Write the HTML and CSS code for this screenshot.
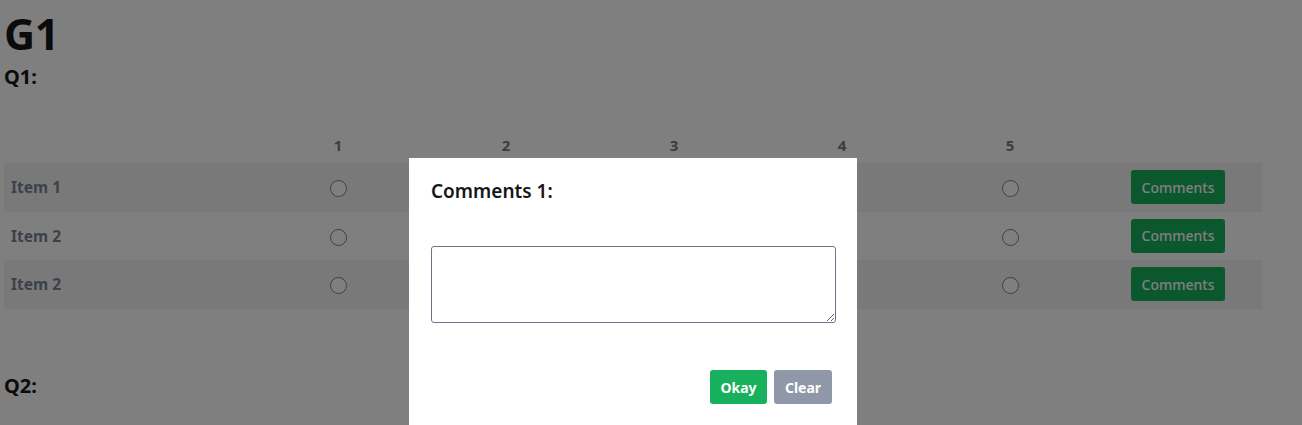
FILE: index.html
```html
<!DOCTYPE html>
<html lang="en">
<head>
<meta charset="utf-8">
<title>G1</title>
<link rel="stylesheet" href="styles.css">
</head>
<body>
<main class="page">
  <h1 class="group-title">G1</h1>
  <section class="question">
    <h2 class="question-title">Q1:</h2>
    <table class="matrix">
      <colgroup>
        <col class="col-label">
        <col class="col-opt"><col class="col-opt"><col class="col-opt"><col class="col-opt"><col class="col-opt">
        <col class="col-opt">
      </colgroup>
      <thead>
        <tr>
          <th></th><th>1</th><th>2</th><th>3</th><th>4</th><th>5</th><th></th>
        </tr>
      </thead>
      <tbody>
        <tr class="stripe">
          <td class="label">Item 1</td>
          <td><span class="radio"></span></td><td><span class="radio"></span></td><td><span class="radio"></span></td><td><span class="radio"></span></td><td><span class="radio"></span></td>
          <td><button class="btn btn-green btn-comments">Comments</button></td>
        </tr>
        <tr>
          <td class="label">Item 2</td>
          <td><span class="radio"></span></td><td><span class="radio"></span></td><td><span class="radio"></span></td><td><span class="radio"></span></td><td><span class="radio"></span></td>
          <td><button class="btn btn-green btn-comments">Comments</button></td>
        </tr>
        <tr class="stripe">
          <td class="label">Item 2</td>
          <td><span class="radio"></span></td><td><span class="radio"></span></td><td><span class="radio"></span></td><td><span class="radio"></span></td><td><span class="radio"></span></td>
          <td><button class="btn btn-green btn-comments">Comments</button></td>
        </tr>
      </tbody>
    </table>
  </section>
  <section class="question">
    <h2 class="question-title q2">Q2:</h2>
  </section>
</main>
<div class="overlay"></div>
<div class="modal">
  <h3 class="modal-title">Comments 1:</h3>
  <textarea class="modal-text"></textarea>
  <div class="modal-actions">
    <button class="btn btn-green btn-modal">Okay</button>
    <button class="btn btn-gray btn-modal">Clear</button>
  </div>
</div>
</body>
</html>
```

FILE: styles.css
```css
* { box-sizing: border-box; }
html, body { margin: 0; padding: 0; background: #ffffff; }
body {
  font-family: "Noto Sans", "Open Sans", sans-serif;
  color: #161616;
  overflow: hidden;
  height: 425px;
}
.page { padding: 0 4px; }
.group-title {
  font-size: 43px;
  font-weight: 700;
  line-height: 50px;
  margin: 9px 0 0 0;
  letter-spacing: -0.3px;
}
.question-title {
  font-size: 20px;
  font-weight: 700;
  line-height: 26px;
  margin: 5px 0 0 0;
}
.question-title.q2 { margin-top: 64px; }
.matrix {
  margin-top: 36px;
  border-collapse: collapse;
  table-layout: fixed;
  width: 1258px;
}
.col-label { width: 250px; }
.col-opt { width: 168px; }
.matrix th {
  font-size: 15px;
  font-weight: 700;
  color: #727b91;
  height: 37px;
  padding: 0;
  text-align: center;
  vertical-align: middle;
}
.matrix td {
  height: 48.5px;
  padding: 0;
  text-align: center;
  vertical-align: middle;
}
.matrix tr.stripe td { background: #f3f3f3; }
.matrix td.label {
  text-align: left;
  padding-left: 7px;
  font-size: 15.5px;
  font-weight: 700;
  color: #7a8399;
}
.radio {
  display: inline-block;
  width: 17px;
  height: 17px;
  border: 1.5px solid #7a8199;
  border-radius: 50%;
  background: #fff;
  vertical-align: middle;
}
.btn {
  border: none;
  border-radius: 3px;
  font-family: inherit;
  font-weight: 600;
  color: #ffffff;
  height: 34px;
  padding: 0;
  cursor: pointer;
}
.btn-green { background: #18b05c; }
.btn-gray { background: #9097a8; }
.btn-comments {
  width: 94px;
  font-size: 14px;
  font-weight: 500;
}
.overlay {
  position: fixed;
  inset: 0;
  background: rgba(0, 0, 0, 0.5);
}
.modal {
  position: absolute;
  left: 409px;
  top: 158px;
  width: 448px;
  height: 267px;
  background: #ffffff;
  padding: 20px 21px 0 22px;
  display: flex;
  flex-direction: column;
}
.modal-title {
  margin: 0;
  font-size: 19px;
  font-weight: 600;
  line-height: 26px;
  color: #161616;
}
.modal-text {
  margin-top: 42px;
  width: 405px;
  height: 77px;
  flex: none;
  border: 1px solid #6c7589;
  border-radius: 3px;
  resize: both;
  font-family: inherit;
}
.modal-actions {
  margin-top: 47px;
  display: flex;
  justify-content: flex-end;
  gap: 7px;
  padding-right: 4px;
}
.btn-modal {
  font-size: 14px;
  font-weight: 700;
  width: 57px;
}
.btn-gray.btn-modal { width: 58px; }
```
